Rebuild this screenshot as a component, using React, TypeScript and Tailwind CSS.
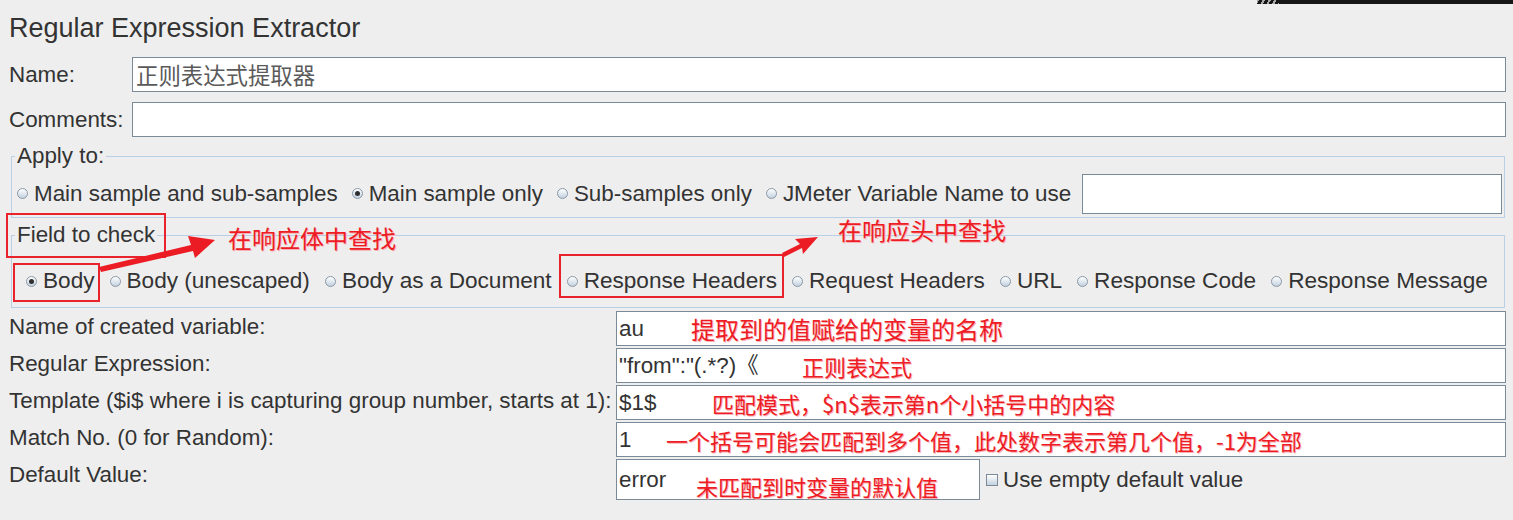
import React from 'react'

const Radio = ({checked = false}: {checked?: boolean}) => (
  <span className="flex h-[11px] w-[11px] shrink-0 items-center justify-center rounded-full border border-[#8a98a5] bg-linear-to-b from-white to-[#c3d2df]">
    {checked && <span className="h-[5px] w-[5px] rounded-full bg-[#2f2f2f]" />}
  </span>
)

const Option = ({label, checked}: {label: string; checked?: boolean}) => (
  <span className="flex items-center gap-[6px] whitespace-nowrap">
    <Radio checked={checked} />
    <span>{label}</span>
  </span>
)

const Note = ({children, className}: {children: React.ReactNode; className: string}) => (
  <span
    className={`absolute whitespace-nowrap font-['Noto_Sans_CJK_SC',sans-serif] text-[#ee1c25] [text-shadow:1px_1px_0_#f7b3b7] ${className}`}
  >
    {children}
  </span>
)

const fields = [
  {
    label: 'Name of created variable:',
    value: 'au',
    note: '提取到的值赋给的变量的名称',
    noteClass: 'left-[74px] top-1/2 -translate-y-1/2 text-[24px] leading-[24px]',
  },
  {
    label: 'Regular Expression:',
    value: '"from":"(.*?)《',
    note: '正则表达式',
    noteClass: 'left-[185px] top-1/2 -translate-y-1/2 text-[22px] leading-[24px]',
  },
  {
    label: 'Template ($i$ where i is capturing group number, starts at 1):',
    value: '$1$',
    note: '匹配模式，$n$表示第n个小括号中的内容',
    noteClass: 'left-[95px] top-1/2 -translate-y-1/2 text-[22px] leading-[24px]',
  },
  {
    label: 'Match No. (0 for Random):',
    value: '1',
    note: '一个括号可能会匹配到多个值，此处数字表示第几个值，-1为全部',
    noteClass: 'left-[49px] top-1/2 -translate-y-1/2 text-[22px] leading-[24px]',
  },
]

const App = () => {
  return (
    <div className="relative h-[520px] w-full overflow-hidden bg-[#eeeeee] font-['Liberation_Sans','Noto_Sans_CJK_SC',sans-serif] text-[22.4px] text-[#333333]">
      <div className="flex h-[4px] justify-end">
        <span className="w-[22px] bg-[repeating-linear-gradient(120deg,#a8a8a8_0px,#a8a8a8_2px,#161616_2px,#161616_5px)]" />
        <span className="w-[234px] bg-[#161616]" />
      </div>

      <div className="pl-[9px] pr-[7px]">
        <h1 className="mt-[9px] text-[27px] leading-[31px]">Regular Expression Extractor</h1>

        <div className="mt-[13px] flex flex-col gap-[10px]">
          <div className="flex items-center">
            <span className="w-[123px] shrink-0 leading-[26px]">Name:</span>
            <div className="h-[35px] flex-1 border border-[#7a8a99] bg-white px-[3px] font-['Noto_Sans_CJK_SC',sans-serif] text-[22.4px] leading-[33px] text-[#5a5a5a]">
              正则表达式提取器
            </div>
          </div>
          <div className="flex items-center">
            <span className="w-[123px] shrink-0 leading-[26px]">Comments:</span>
            <div className="h-[35px] flex-1 border border-[#7a8a99] bg-white" />
          </div>
        </div>

        <fieldset className="mt-[6px] ml-[2px] mr-[1px] border border-[#b8cfe5] px-[5px] pb-[3px] pr-[2px]">
          <legend className="-ml-[2px] px-[2px] leading-[26px]">Apply to:</legend>
          <div className="flex items-center gap-[14px] pt-[5px]">
            <Option label="Main sample and sub-samples" />
            <Option label="Main sample only" checked />
            <Option label="Sub-samples only" />
            <Option label="JMeter Variable Name to use" />
            <div className="-ml-[3px] h-[40px] flex-1 border border-[#7a8a99] bg-white" />
          </div>
        </fieldset>

        <fieldset className="mt-[4px] ml-[2px] mr-[1px] border border-[#b8cfe5] px-[5px] pb-[11px]">
          <legend className="relative -ml-[2px] px-[2px] leading-[26px]">
            Field to check
            <span className="absolute -top-[9px] -right-[9px] -bottom-[10px] -left-[9px] border-2 border-[#e8232b]" />
          </legend>
          <div className="flex items-center gap-[15px] pt-[18px] text-[22.6px] leading-[30px]">
            <span className="relative ml-[9px]">
              <Option label="Body" checked />
              <span className="absolute -top-[3px] -right-[5px] -bottom-[6px] -left-[13px] border-2 border-[#e8232b]" />
            </span>
            <Option label="Body (unescaped)" />
            <Option label="Body as a Document" />
            <span className="relative">
              <Option label="Response Headers" />
              <span className="absolute -top-[12px] -right-[7px] -bottom-[2px] -left-[8px] border-2 border-[#e8232b]" />
            </span>
            <Option label="Request Headers" />
            <Option label="URL" />
            <Option label="Response Code" />
            <Option label="Response Message" />
          </div>
        </fieldset>

        <div className="mt-[3px] flex flex-col gap-[2px]">
          {fields.map(f => (
            <div key={f.label} className="flex items-start">
              <span className="w-[607px] shrink-0 whitespace-nowrap leading-[31px]">{f.label}</span>
              <div className="relative h-[35px] flex-1 border border-[#7a8a99] bg-white px-[2px] leading-[33px]">
                {f.value}
                <Note className={f.noteClass}>{f.note}</Note>
              </div>
            </div>
          ))}
          <div className="flex items-start">
            <span className="w-[607px] shrink-0 leading-[31px]">Default Value:</span>
            <div className="relative h-[41px] w-[364px] border border-[#7a8a99] bg-white px-[2px] leading-[39px]">
              error
              <Note className="left-[79px] top-[14px] text-[22px] leading-[24px]">未匹配到时变量的默认值</Note>
            </div>
            <label className="ml-[6px] flex h-[41px] items-center gap-[5px] whitespace-nowrap">
              <span className="h-[12px] w-[12px] border border-[#7a8a99] bg-linear-to-b from-white to-[#c3d2df]" />
              Use empty default value
            </label>
          </div>
        </div>
      </div>

      <Note className="left-[228px] top-[226px] text-[24px] leading-[24px]">在响应体中查找</Note>
      <Note className="left-[838px] top-[218px] text-[24px] leading-[24px]">在响应头中查找</Note>

      <svg className="pointer-events-none absolute inset-0" width="1513" height="520" viewBox="0 0 1513 520">
        <polygon
          points="99,267 191,245 188,236 215,240 195,258 193,251 101,272"
          fill="#ec1c24"
        />
        <polygon
          points="782,253 800,244 795,239 818,237 803,254 802,248 784,257"
          fill="#ec1c24"
        />
      </svg>
    </div>
  )
}

export default App
